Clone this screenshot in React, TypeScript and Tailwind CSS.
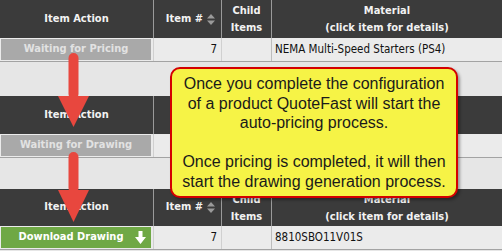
import React from "react";

const hdrFont = { fontFamily: '"DejaVu Sans Condensed", "DejaVu Sans", Tahoma, sans-serif' };

function SortIcon() {
  return (
    <svg width="8" height="11" viewBox="0 0 8 11" className="ml-[4px]">
      <path d="M4 0 L8 4.5 L0 4.5 Z" fill="#9a9a9a" />
      <path d="M0 6.5 L8 6.5 L4 11 Z" fill="#9a9a9a" />
    </svg>
  );
}

function Header({ h, hidden }: { h: string; hidden?: boolean }) {
  return (
    <div
      className={`grid grid-cols-[153px_68px_50px_1fr] bg-[#3b3b3b] text-[#f2f2f2] font-bold text-[11px] ${h}`}
      style={hdrFont}
    >
      <div className="flex items-center justify-center">Item Action</div>
      <div className="flex items-center justify-end pr-[6px] border-l border-[#9a9a9a]">
        {!hidden && (
          <>
            Item #<SortIcon />
          </>
        )}
      </div>
      <div className="flex flex-col items-center justify-center leading-[17px] border-l border-[#9a9a9a]">
        {!hidden && (
          <>
            <span>Child</span>
            <span>Items</span>
          </>
        )}
      </div>
      <div className="flex flex-col items-center justify-center leading-[17px] border-l border-[#9a9a9a]">
        {!hidden && (
          <>
            <span>Material</span>
            <span>(click item for details)</span>
          </>
        )}
      </div>
    </div>
  );
}

function Row({
  button,
  num,
  material,
}: {
  button: React.ReactNode;
  num?: string;
  material?: string;
}) {
  return (
    <div
      className="grid grid-cols-[153px_68px_50px_1fr] h-[24px] bg-[#ebebeb] border-b border-[#a3a3a3] text-[11.5px] text-[#111]"
      style={hdrFont}
    >
      <div className="p-[1px] pr-[2px]">{button}</div>
      <div className="flex items-center justify-end pr-[4px] border-l border-[#d0d0d0]">{num}</div>
      <div className="border-l border-[#d0d0d0]" />
      <div className="flex items-center pl-[3px] border-l border-[#bdbdbd]">{material}</div>
    </div>
  );
}

function GrayBtn({ text }: { text: string }) {
  return (
    <div className="h-full bg-[#a9a9a9] text-[#e2e2e2] font-bold text-[11px] flex items-center justify-center">
      {text}
    </div>
  );
}

export default function App() {
  return (
    <div className="relative w-[502px] h-[251px] overflow-hidden bg-[#e6e6e6]">
      <Header h="h-[38px]" />
      <Row
        button={<GrayBtn text="Waiting for Pricing" />}
        num="7"
        material="NEMA Multi-Speed Starters (PS4)"
      />
      <div className="h-[34px]" />
      <Header h="h-[38px]" hidden />
      <Row button={<GrayBtn text="Waiting for Drawing" />} />
      <div className="h-[31px]" />
      <Header h="h-[37px]" />
      <Row
        button={
          <div className="h-full bg-[#6fa845] text-white font-bold text-[11px] flex items-center pl-[16px] pr-[5px]">
            <span className="flex-1 text-center pr-[10px]">Download Drawing</span>
            <svg width="11" height="13" viewBox="0 0 11 13">
              <path d="M3.5 0 H7.5 V6 H11 L5.5 13 L0 6 H3.5 Z" fill="#ffffff" />
            </svg>
          </div>
        }
        num="7"
        material="8810SBO11V01S"
      />

      {/* arrows */}
      <svg className="absolute left-0 top-0" width="502" height="251" viewBox="0 0 502 251">
        <rect x="68.5" y="53" width="10" height="46" rx="5" fill="#e8473e" />
        <path d="M58 96 L89 96 L73.5 127 Z" fill="#e8473e" />
        <rect x="68.5" y="152" width="10" height="41" rx="5" fill="#e8473e" />
        <path d="M58 190 L89 190 L73.5 222 Z" fill="#e8473e" />
      </svg>

      {/* callout */}
      <div
        className="absolute left-[170px] top-[67px] w-[288px] h-[131px] rounded-[10px] border-2 border-[#d40000] bg-[#f6f346] shadow-[2px_2px_3px_rgba(0,0,0,0.35)] pt-[5px] text-center text-[16px] leading-[19.5px] text-[#1a1a1a]"
        style={{ fontFamily: '"Liberation Sans", Arial, sans-serif' }}
      >
        <div>Once you complete the configuration</div>
        <div>of a product QuoteFast will start the</div>
        <div>auto-pricing process.</div>
        <div>&nbsp;</div>
        <div>Once pricing is completed, it will then</div>
        <div>start the drawing generation process.</div>
      </div>
    </div>
  );
}
